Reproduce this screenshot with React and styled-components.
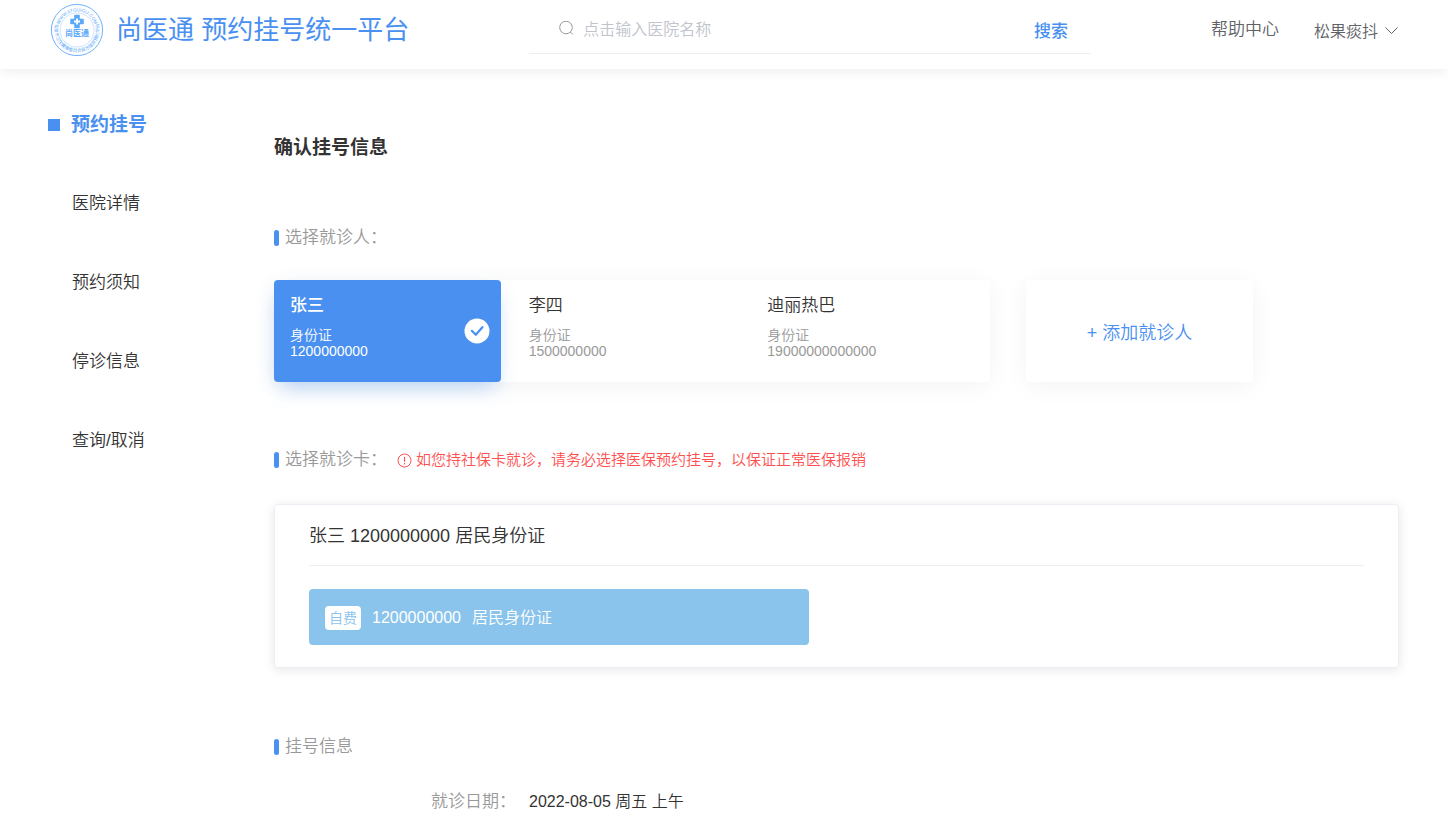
import React, { useState } from 'react';
import styled, { createGlobalStyle } from 'styled-components';

const GlobalStyle = createGlobalStyle`
  * {
    box-sizing: border-box;
  }

  body {
    margin: 0;
    background: #fff;
    color: #333;
    font-family: 'Liberation Sans', 'Noto Sans CJK SC', sans-serif;
    font-size: 16px;
    font-weight: 350;
    line-height: 24px;
  }

  a {
    color: inherit;
    text-decoration: none;
  }

  button {
    font-family: inherit;
    font-weight: inherit;
    border: none;
    background: none;
    padding: 0;
    cursor: pointer;
  }
`;

const Header = styled.header`
  display: flex;
  align-items: center;
  padding: 0 48px 9px;
  background: #fff;
  box-shadow: 0 2px 12px rgba(0, 0, 0, 0.08);
`;

const Brand = styled.a`
  display: flex;
  align-items: center;
  gap: 11px;
  height: 60px;
  color: #4990f1;
  font-size: 26px;
  font-weight: 400;
  white-space: nowrap;
`;

const SearchForm = styled.form`
  flex: 1;
  display: flex;
  align-items: center;
  gap: 8px;
  height: 48px;
  margin: 0 120px;
  padding: 0 23px 0 29px;
  border-bottom: 1px solid #eee;
`;

const SearchInput = styled.input`
  flex: 1;
  min-width: 0;
  padding: 0;
  border: none;
  outline: none;
  color: #333;
  font-family: inherit;
  font-size: 16px;
  font-weight: inherit;
  line-height: 24px;

  &::placeholder {
    color: #c0c4cc;
  }
`;

const SearchButton = styled.button`
  color: #4990f1;
  font-size: 17px;
  font-weight: 500;
`;

const HeaderLinks = styled.nav`
  display: flex;
  align-items: center;
  gap: 35px;
  color: #606266;
  font-size: 17px;
  white-space: nowrap;
`;

const UserButton = styled.button`
  display: flex;
  align-items: center;
  gap: 6px;
  color: #606266;
  font-size: 16px;
`;

const Page = styled.div`
  display: flex;
  padding: 0 48px;
`;

const Sidebar = styled.nav`
  flex: none;
  width: 226px;
  padding-top: 44px;
`;

const SidebarTitle = styled.a`
  display: flex;
  align-items: center;
  gap: 11px;
  color: #4990f1;
  font-size: 19px;
  font-weight: bold;

  &::before {
    content: '';
    width: 12px;
    height: 12px;
    background: #4990f1;
  }
`;

const MenuList = styled.ul`
  display: flex;
  flex-direction: column;
  gap: 55px;
  margin: 55px 0 0;
  padding: 0 0 0 24px;
  list-style: none;
  font-size: 17px;
`;

const Main = styled.main`
  flex: 1;
  min-width: 0;
  padding-top: 67px;
`;

const PageTitle = styled.h1`
  margin: 0 0 66px;
  font-size: 19px;
  line-height: 24px;
  font-weight: bold;
`;

const SectionTitle = styled.h2`
  display: flex;
  align-items: center;
  gap: 6px;
  margin: 0;
  color: #999;
  font-size: 17px;
  line-height: 24px;
  font-weight: inherit;

  &::before {
    content: '';
    width: 5px;
    height: 16px;
    border-radius: 3px;
    background: #4990f1;
  }
`;

const SectionHead = styled.div`
  display: flex;
  align-items: center;
  gap: 10px;
`;

const Notice = styled.span`
  display: flex;
  align-items: center;
  gap: 4px;
  color: #ff5050;
  font-size: 15px;
`;

const PatientRow = styled.div`
  display: grid;
  grid-template-columns: 716fr 227fr 110fr;
  gap: 36px;
  margin: 30px 0 66px;
`;

const PatientGroup = styled.div`
  display: grid;
  grid-template-columns: repeat(3, 1fr);
  border-radius: 4px;
  box-shadow: 0 4px 24px rgba(0, 0, 0, 0.05);
`;

const PatientCard = styled.button`
  display: flex;
  align-items: center;
  justify-content: space-between;
  height: 102px;
  margin-right: 12px;
  padding: 0 11px 0 16px;
  border-radius: 4px;
  text-align: left;
  color: ${(props) => (props.$active ? '#fff' : '#999')};
  background: ${(props) => (props.$active ? '#4990f1' : 'transparent')};
  box-shadow: ${(props) =>
    props.$active ? '0 10px 20px -6px rgba(73, 144, 241, 0.4)' : 'none'};
`;

const PatientInfo = styled.span`
  display: flex;
  flex-direction: column;
  padding-bottom: 10px;
  font-size: 14px;
  line-height: 16px;
`;

const PatientName = styled.span`
  margin-bottom: 9px;
  color: ${(props) => (props.$active ? '#fff' : '#333')};
  font-size: 17px;
  line-height: 24px;
  font-weight: ${(props) => (props.$active ? 500 : 'inherit')};
`;

const AddButton = styled.button`
  height: 102px;
  border-radius: 4px;
  color: #4990f1;
  font-size: 18px;
  box-shadow: 0 4px 24px rgba(0, 0, 0, 0.05);
`;

const Card = styled.section`
  margin: 32px 0 67px;
  padding: 0 34px 22px;
  border: 1px solid #ebeef5;
  border-radius: 4px;
  box-shadow: 0 2px 12px rgba(0, 0, 0, 0.1);
`;

const CardTitle = styled.h3`
  margin: 0 0 23px;
  padding: 19px 0 17px;
  border-bottom: 1px solid #eee;
  font-size: 18px;
  line-height: 24px;
  font-weight: inherit;
`;

const VisitCard = styled.div`
  display: flex;
  align-items: center;
  gap: 11px;
  max-width: 500px;
  height: 56px;
  padding: 2px 16px 0;
  border-radius: 4px;
  color: #fff;
  background: #8ac4ec;
`;

const PayTag = styled.span`
  padding: 0 4px;
  border-radius: 4px;
  color: #8ac4ec;
  background: #fff;
  font-size: 14px;
`;

const Details = styled.dl`
  display: grid;
  grid-template-columns: 242px 1fr;
  column-gap: 13px;
  margin: 31px 0 0;
`;

const DetailLabel = styled.dt`
  color: #999;
  font-size: 17px;
  text-align: right;
`;

const DetailValue = styled.dd`
  margin: 0;
`;

const menuItems = ['医院详情', '预约须知', '停诊信息', '查询/取消'];

const patients = [
  { name: '张三', number: '1200000000' },
  { name: '李四', number: '1500000000' },
  { name: '迪丽热巴', number: '19000000000000' },
];

function Logo() {
  return (
    <svg width="57" height="56" viewBox="-1 0 57 56" fill="none" aria-hidden="true">
      <defs>
        <path id="ring-top" d="M9.4 28a18.6 18.6 0 0 1 37.2 0" />
        <path id="ring-bottom" d="M7.2 19.5a22.4 22.4 0 1 0 41.6 0" />
      </defs>
      <circle cx="28" cy="28" r="25.6" stroke="#6db3fb" strokeWidth="1" />
      <circle cx="28" cy="28" r="17" stroke="#a9d2fd" strokeWidth="0.6" />
      <g fill="#5aa8fa" fontSize="4.6">
        <text textAnchor="middle">
          <textPath href="#ring-top" startOffset="50%">WWW.ATGUIGU.COM</textPath>
        </text>
        <text textAnchor="middle">
          <textPath href="#ring-bottom" startOffset="50%">北京市卫生健康委员会官方指定预约平台</textPath>
        </text>
      </g>
      <path
        d="M26 13.5h4v4h4v4h-4v4h-4v-4h-4v-4h4z"
        fill="#5aa8fa"
        stroke="#5aa8fa"
        strokeWidth="1.6"
        strokeLinejoin="round"
      />
      <path d="M28 16.5v6M25 19.5h6" stroke="#fff" strokeWidth="1.8" />
      <text x="28" y="34.2" textAnchor="middle" fill="#5aa8fa" fontSize="8" fontWeight="bold">
        尚医通
      </text>
    </svg>
  );
}

function SearchIcon() {
  return (
    <svg width="17" height="17" viewBox="0 0 17 17" fill="none" stroke="#999" aria-hidden="true">
      <circle cx="8" cy="6.5" r="6.3" />
      <path d="M12.3 11l2.5 2.5" />
    </svg>
  );
}

function ArrowDown() {
  return (
    <svg width="15" height="15" viewBox="0 0 15 15" fill="none" stroke="#606266" aria-hidden="true">
      <path d="M1.5 4.5l6 6 6-6" />
    </svg>
  );
}

function WarningIcon() {
  return (
    <svg width="15" height="15" viewBox="0 0 15 15" fill="none" stroke="#ff5050" aria-hidden="true">
      <circle cx="7.5" cy="7.5" r="6.5" />
      <path d="M7.5 3.7v5M7.5 10v1.4" strokeWidth="1.2" />
    </svg>
  );
}

function CheckedIcon() {
  return (
    <svg width="26" height="26" viewBox="0 0 26 26" fill="none" aria-hidden="true">
      <circle cx="13" cy="13" r="12.5" fill="#fff" />
      <path
        d="M7.8 12.8l4 4 6.6-7.6"
        stroke="#4990f1"
        strokeWidth="2.2"
        strokeLinecap="round"
        strokeLinejoin="round"
      />
    </svg>
  );
}

function App() {
  const [selected, setSelected] = useState(0);
  const [keyword, setKeyword] = useState('');
  const current = patients[selected];

  return (
    <>
      <GlobalStyle />
      <Header>
        <Brand href="#">
          <Logo />
          尚医通 预约挂号统一平台
        </Brand>
        <SearchForm onSubmit={(e) => e.preventDefault()}>
          <SearchIcon />
          <SearchInput
            aria-label="点击输入医院名称"
            placeholder="点击输入医院名称"
            value={keyword}
            onChange={(e) => setKeyword(e.target.value)}
          />
          <SearchButton type="submit">搜索</SearchButton>
        </SearchForm>
        <HeaderLinks>
          <a href="#">帮助中心</a>
          <UserButton type="button">
            松果痰抖
            <ArrowDown />
          </UserButton>
        </HeaderLinks>
      </Header>

      <Page>
        <Sidebar>
          <SidebarTitle href="#">预约挂号</SidebarTitle>
          <MenuList>
            {menuItems.map((item) => (
              <li key={item}>
                <a href="#">{item}</a>
              </li>
            ))}
          </MenuList>
        </Sidebar>

        <Main>
          <PageTitle>确认挂号信息</PageTitle>

          <SectionTitle>选择就诊人：</SectionTitle>
          <PatientRow>
            <PatientGroup>
              {patients.map((patient, index) => (
                <PatientCard
                  key={patient.number}
                  type="button"
                  $active={index === selected}
                  onClick={() => setSelected(index)}
                >
                  <PatientInfo>
                    <PatientName $active={index === selected}>{patient.name}</PatientName>
                    <span>身份证</span>
                    <span>{patient.number}</span>
                  </PatientInfo>
                  {index === selected && <CheckedIcon />}
                </PatientCard>
              ))}
            </PatientGroup>
            <AddButton type="button">+ 添加就诊人</AddButton>
          </PatientRow>

          <SectionHead>
            <SectionTitle>选择就诊卡：</SectionTitle>
            <Notice>
              <WarningIcon />
              如您持社保卡就诊，请务必选择医保预约挂号，以保证正常医保报销
            </Notice>
          </SectionHead>
          <Card>
            <CardTitle>
              {current.name} {current.number} 居民身份证
            </CardTitle>
            <VisitCard>
              <PayTag>自费</PayTag>
              <span>{current.number}</span>
              <span>居民身份证</span>
            </VisitCard>
          </Card>

          <SectionTitle>挂号信息</SectionTitle>
          <Details>
            <DetailLabel>就诊日期：</DetailLabel>
            <DetailValue>2022-08-05 周五 上午</DetailValue>
          </Details>
        </Main>
      </Page>
    </>
  );
}

export default App;
